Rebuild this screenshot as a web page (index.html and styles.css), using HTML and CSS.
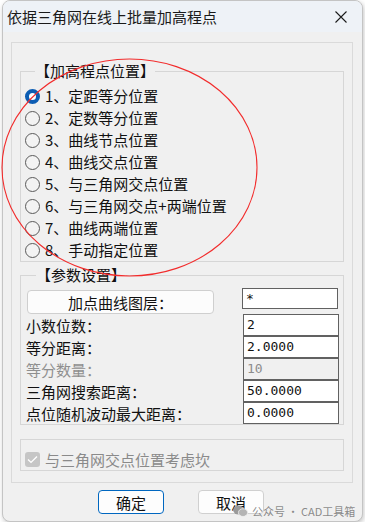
FILE: index.html
```html
<!DOCTYPE html>
<html>
	<head>
		<meta charset="utf-8">
		<title>依据三角网在线上批量加高程点</title>
		<link rel="stylesheet" href="styles.css">
	</head>
	<body>
		<div class="janela">
			<div class="titulo">
				<span>依据三角网在线上批量加高程点</span>
				<svg class="fechar" width="12" height="12" viewBox="0 0 12 12"><path d="M0.5 0.5 L11.5 11.5 M11.5 0.5 L0.5 11.5" stroke="#1b1b1b" stroke-width="1.1" fill="none"/></svg>
			</div>
			<div class="corpo">
				<div class="quadro">
					<fieldset class="grupo posicao">
						<legend>【加高程点位置】</legend>
						<div class="opcao"><span class="radio marcado"></span>1、定距等分位置</div>
						<div class="opcao"><span class="radio"></span>2、定数等分位置</div>
						<div class="opcao"><span class="radio"></span>3、曲线节点位置</div>
						<div class="opcao"><span class="radio"></span>4、曲线交点位置</div>
						<div class="opcao"><span class="radio"></span>5、与三角网交点位置</div>
						<div class="opcao"><span class="radio"></span>6、与三角网交点+两端位置</div>
						<div class="opcao"><span class="radio"></span>7、曲线两端位置</div>
						<div class="opcao"><span class="radio"></span>8、手动指定位置</div>
					</fieldset>

					<fieldset class="grupo parametros">
						<legend>【参数设置】</legend>
						<div class="linha primeira">
							<button class="botaocamada">加点曲线图层：</button>
							<div class="caixa">*</div>
						</div>
						<div class="linha"><span>小数位数：</span><div class="caixa">2</div></div>
						<div class="linha"><span>等分距离：</span><div class="caixa">2.0000</div></div>
						<div class="linha desativado"><span>等分数量：</span><div class="caixa">10</div></div>
						<div class="linha"><span>三角网搜索距离：</span><div class="caixa">50.0000</div></div>
						<div class="linha"><span>点位随机波动最大距离：</span><div class="caixa">0.0000</div></div>
					</fieldset>

					<fieldset class="grupo opcaocheck">
						<div class="check">
							<span class="quadradinho"><svg width="11" height="9" viewBox="0 0 11 9"><path d="M1 4.6 L4 7.4 L10 1.4" stroke="#ffffff" stroke-width="1.4" fill="none"/></svg></span>
							与三角网交点位置考虑坎
						</div>
					</fieldset>
				</div>

				<div class="botoes">
					<button class="ok">确定</button>
					<button>取消</button>
				</div>
			</div>
		</div>

		<!-- anotacao por cima da janela -->
		<svg class="elipse" width="365" height="527" viewBox="0 0 365 527"><ellipse cx="129.5" cy="167.5" rx="127.5" ry="108.5" fill="none" stroke="#f22c2c" stroke-width="1.1"/></svg>

		<div class="marca">
			<svg width="15" height="12" viewBox="0 0 15 12"><ellipse cx="5.5" cy="5" rx="5.3" ry="4.5" fill="#9a9a9a"/><ellipse cx="10" cy="7.6" rx="4.6" ry="3.9" fill="#b4b4b4" stroke="#f0f0f0" stroke-width="0.8"/></svg>
			<span>公众号 · CAD工具箱</span>
		</div>
	</body>
</html>
```

FILE: styles.css
```css
body { margin: 0; background: #ffffff; font-family: "Noto Sans CJK SC", "Noto Sans", sans-serif; font-size: 15px; color: #111111; }

.janela { margin-left: 2px; width: 361px; box-sizing: border-box; border: 1px solid #c4c4c4; border-radius: 8px; overflow: hidden; background: #f0f0f0; box-shadow: 1px 2px 5px rgba(0,0,0,0.22); }

/* barra de titulo */
.titulo { height: 31px; background: #eef2f7; display: flex; align-items: center; justify-content: space-between; padding: 0 15px 0 4px; font-size: 15px; color: #1a1a1a; }

.corpo { padding: 10px 9px 7px 8px; }
.quadro { border: 1px solid #dadada; padding: 18px 8px 11px 8px; }

/* grupos */
.grupo { margin: 0; border: 1px solid #d6d6d6; min-width: 0; }
.grupo legend { padding: 0; margin-left: 10px; line-height: 20px; font-size: 15px; }

.posicao { padding: 4px 4px 0 4px; }
.opcao { height: 22px; line-height: 22px; display: flex; align-items: center; white-space: nowrap; }
.radio { width: 15px; height: 15px; box-sizing: border-box; border: 1px solid #5a5a5a; border-radius: 50%; background: #f3f3f3; margin-right: 5px; flex-shrink: 0; }
.radio.marcado { border: 4.5px solid #0d5db3; background: #ffffff; }

.parametros { margin-top: 3px; padding: 3px 4px 0 5px; }
.linha { height: 22px; display: flex; align-items: center; justify-content: space-between; white-space: nowrap; }
.linha.primeira { height: 26px; align-items: flex-start; }
.linha.desativado { color: #8f8f8f; }
.caixa { width: 96px; height: 22px; box-sizing: border-box; border: 1px solid #616161; background: #ffffff; font-family: "DejaVu Sans Mono", monospace; font-size: 13px; line-height: 20px; padding-left: 3px; color: #111111; }
.primeira .caixa { height: 21px; margin-right: 1px; }
.desativado .caixa { background: #f0f0f0; color: #8c8c8c; }
.botaocamada { margin: 2px 0 0 1px; width: 187px; height: 24px; border: 1px solid #cfcfcf; border-radius: 4px; background: #fcfcfc; font-family: inherit; font-size: 15px; color: #111111; padding: 0; }

.opcaocheck { margin-top: 14px; padding: 8px 4px 0 4px; }
.check { height: 22px; display: flex; align-items: center; color: #8a8a8a; white-space: nowrap; }
.quadradinho { width: 15px; height: 15px; border-radius: 3px; background: #c6c6c6; display: flex; align-items: center; justify-content: center; margin-right: 5px; }

/* botoes de baixo */
.botoes { margin-top: 7px; display: flex; justify-content: center; gap: 34px; padding-right: 2px; }
.botoes button { width: 66px; height: 24px; border: 1px solid #d0d0d0; border-radius: 4px; background: #fdfdfd; font-family: inherit; font-size: 15px; color: #111111; padding: 0; }
.botoes button.ok { border-color: #0067c0; }

/* anotacoes */
.elipse { position: absolute; top: 0; left: 0; pointer-events: none; }
.marca { position: absolute; left: 233px; top: 503px; display: flex; align-items: center; gap: 4px; font-size: 11px; line-height: 16px; color: rgba(125,125,125,0.9); white-space: nowrap; }
```
